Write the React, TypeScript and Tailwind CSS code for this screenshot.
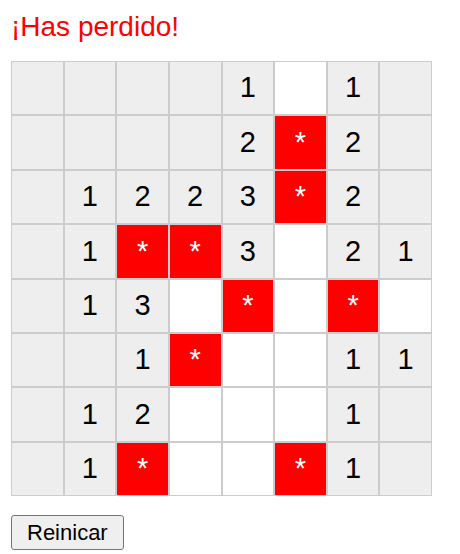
import React from "react";

type Cell = { kind: "g" | "w" | "m"; value?: string };

const g = (value?: string): Cell => ({ kind: "g", value });
const w: Cell = { kind: "w" };
const m: Cell = { kind: "m" };

const board: Cell[][] = [
  [g(), g(), g(), g(), g("1"), w, g("1"), g()],
  [g(), g(), g(), g(), g("2"), m, g("2"), g()],
  [g(), g("1"), g("2"), g("2"), g("3"), m, g("2"), g()],
  [g(), g("1"), m, m, g("3"), w, g("2"), g("1")],
  [g(), g("1"), g("3"), w, m, w, m, w],
  [g(), g(), g("1"), m, w, w, g("1"), g("1")],
  [g(), g("1"), g("2"), w, w, w, g("1"), g()],
  [g(), g("1"), m, w, w, m, g("1"), g()],
];

const cellClass = (cell: Cell) => {
  if (cell.kind === "m") return "bg-[#ff0000] text-white";
  if (cell.kind === "w") return "bg-white text-black";
  return "bg-[#eeeeee] text-black";
};

const App = () => {
  return (
    <div className="min-h-[554px] bg-white pl-[11px] pt-[11px] font-['Liberation_Sans',Arial,sans-serif]">
      <h1 className="text-[28px] leading-[32px] text-[#ff0000]">¡Has perdido!</h1>
      <div className="mt-[18px] grid w-[421px] grid-cols-[repeat(8,52.625px)] auto-rows-[54.375px]">
        {board.flat().map((cell, i) => (
          <div
            key={i}
            className={`flex items-center justify-center border border-[#cccccc] text-[29px] ${cellClass(cell)}`}
          >
            {cell.kind === "m" ? "*" : cell.value}
          </div>
        ))}
      </div>
      <button className="mt-[19px] rounded-[3px] border border-[#767676] bg-[#efefef] px-[15px] py-1 text-[22px] leading-[25px] text-black">
        Reinicar
      </button>
    </div>
  );
};

export default App;
